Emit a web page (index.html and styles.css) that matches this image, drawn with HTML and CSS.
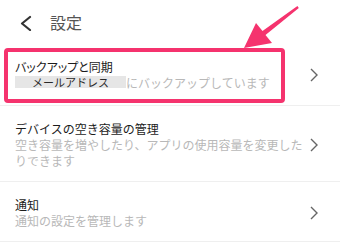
FILE: index.html
```html
<!DOCTYPE html>
<html lang="ja">
<head>
    <meta charset="UTF-8">
    <meta name="viewport" content="width=device-width, initial-scale=1.0">
    <title>設定</title>
    <link rel="stylesheet" href="styles.css">
</head>
<body>

    <div class="page">
        <div class="header">
            <svg class="back" width="14" height="16" viewBox="0 0 14 16">
                <polyline points="11,2 3,8.5 11,15" fill="none" stroke="#333" stroke-width="2.2" stroke-linecap="round" stroke-linejoin="round"/>
            </svg>
            <span class="header-title">設定</span>
        </div>

        <div class="row row-first">
            <div class="row-text">
                <div class="row-title compact">バックアップと同期</div>
                <div class="row-sub"><span class="masked">メールアドレス</span>にバックアップしています</div>
            </div>
            <svg class="chevron" width="8" height="14" viewBox="0 0 8 14">
                <polyline points="1,1 7,7 1,13" fill="none" stroke="#666" stroke-width="1.4"/>
            </svg>
        </div>

        <div class="row">
            <div class="row-text">
                <div class="row-title">デバイスの空き容量の管理</div>
                <div class="row-sub">空き容量を増やしたり、アプリの使用容量を変更したりできます</div>
            </div>
            <svg class="chevron" width="8" height="14" viewBox="0 0 8 14">
                <polyline points="1,1 7,7 1,13" fill="none" stroke="#666" stroke-width="1.4"/>
            </svg>
        </div>

        <div class="row">
            <div class="row-text">
                <div class="row-title">通知</div>
                <div class="row-sub">通知の設定を管理します</div>
            </div>
            <svg class="chevron" width="8" height="14" viewBox="0 0 8 14">
                <polyline points="1,1 7,7 1,13" fill="none" stroke="#666" stroke-width="1.4"/>
            </svg>
        </div>

        <!-- annotation drawn over the screenshot -->
        <div class="highlight-box"></div>
        <svg class="pointer" width="340" height="60" viewBox="0 0 340 60">
            <polygon points="244,48 256,23 262.5,31 297.4,6 298.8,8 265.5,35 272,43" fill="#f5336e"/>
        </svg>
    </div>

</body>
</html>
```

FILE: styles.css
```css
* {
    margin: 0;
    padding: 0;
    box-sizing: border-box;
}

body {
    background-color: #fff;
    font-family: "Noto Sans CJK JP", "Noto Sans", sans-serif;
    color: #222;
}

.page {
    position: relative;
    width: 340px;
    height: 244px;
    overflow: hidden;
}

.header {
    height: 44px;
    display: flex;
    align-items: center;
    padding-left: 19px;
}

.back {
    display: block;
    margin-top: 1px;
}

.header-title {
    margin-left: 17px;
    font-size: 16px;
    color: #555;
    line-height: 20px;
}

.row {
    display: flex;
    align-items: center;
    padding: 15px 22px 12px 15px;
    border-bottom: 1px solid #efefef;
}

.row-first {
    padding-top: 15px;
    padding-bottom: 14px;
}

.row-text {
    flex: 1;
    min-width: 0;
    margin-right: 5px;
}

.row-title {
    font-size: 12px;
    line-height: 16px;
    color: #1c1c1c;
}

.compact {
    font-feature-settings: "palt";
}

.row-sub {
    font-size: 12px;
    line-height: 16px;
    color: #b8b8b8;
}

.masked {
    display: inline-block;
    background-color: #e6e6e6;
    color: #2a2a2a;
    font-size: 11px;
    line-height: 12px;
    padding: 0 17px;
    vertical-align: 1px;
}

.chevron {
    display: block;
    flex-shrink: 0;
}

.highlight-box {
    position: absolute;
    left: 4px;
    top: 48px;
    width: 281px;
    height: 55px;
    border: 4px solid #f5336e;
    border-radius: 4px;
}

.pointer {
    position: absolute;
    left: 0;
    top: 0;
}
```
